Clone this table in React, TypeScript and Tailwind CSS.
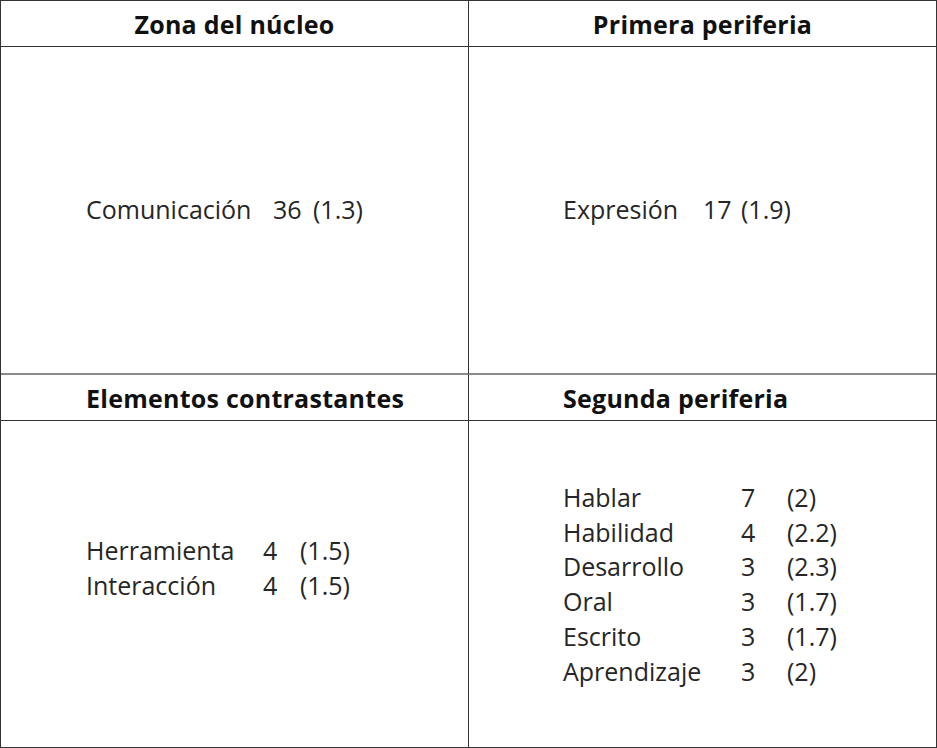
const font = { fontFamily: '"Open Sans", "Liberation Sans", sans-serif' };

type Row = [string, string, string];

const segunda: Row[] = [
  ["Hablar", "7", "(2)"],
  ["Habilidad", "4", "(2.2)"],
  ["Desarrollo", "3", "(2.3)"],
  ["Oral", "3", "(1.7)"],
  ["Escrito", "3", "(1.7)"],
  ["Aprendizaje", "3", "(2)"],
];

const contrastantes: Row[] = [
  ["Herramienta", "4", "(1.5)"],
  ["Interacción", "4", "(1.5)"],
];

function Rows({ rows, cols }: { rows: Row[]; cols: string }) {
  return (
    <div className={`grid ${cols} text-[25px] leading-[34.7px] text-[#262626]`}>
      {rows.map(([a, b, c]) => (
        <div key={a} className="contents">
          <span>{a}</span>
          <span>{b}</span>
          <span>{c}</span>
        </div>
      ))}
    </div>
  );
}

export default function App() {
  return (
    <div
      style={font}
      className="grid h-[748px] w-[937px] grid-cols-[468px_1fr] grid-rows-[46px_328px_46px_1fr] border border-[#333] bg-white"
    >
      <div className="flex items-center justify-center border-r border-b border-[#333] pt-[2px] text-[25px] font-bold tracking-[0.25px] text-[#111]">
        Zona del núcleo
      </div>
      <div className="flex items-center justify-center border-b border-[#333] pt-[2px] text-[25px] font-bold tracking-[0.25px] text-[#111]">
        Primera periferia
      </div>

      <div className="flex items-center border-r border-b-2 border-r-[#333] border-b-[#8a8a8a] pl-[85px] text-[25px] text-[#262626]">
        <span className="w-[187px]">Comunicación</span>
        <span className="w-[40px]">36</span>
        <span>(1.3)</span>
      </div>
      <div className="flex items-center border-b-2 border-b-[#8a8a8a] pl-[94px] text-[25px] text-[#262626]">
        <span className="w-[140px]">Expresión</span>
        <span className="w-[38px]">17</span>
        <span>(1.9)</span>
      </div>

      <div className="flex items-center border-r border-b border-[#333] pt-[2px] pl-[85px] text-[25px] font-bold tracking-[0.25px] text-[#111]">
        Elementos contrastantes
      </div>
      <div className="flex items-center border-b border-[#333] pt-[2px] pl-[94px] text-[25px] font-bold tracking-[0.25px] text-[#111]">
        Segunda periferia
      </div>

      <div className="border-r border-[#333] pt-[112px] pl-[85px]">
        <Rows rows={contrastantes} cols="grid-cols-[177px_37px_1fr]" />
      </div>
      <div className="pt-[59px] pl-[94px]">
        <Rows rows={segunda} cols="grid-cols-[178px_46px_1fr]" />
      </div>
    </div>
  );
}
